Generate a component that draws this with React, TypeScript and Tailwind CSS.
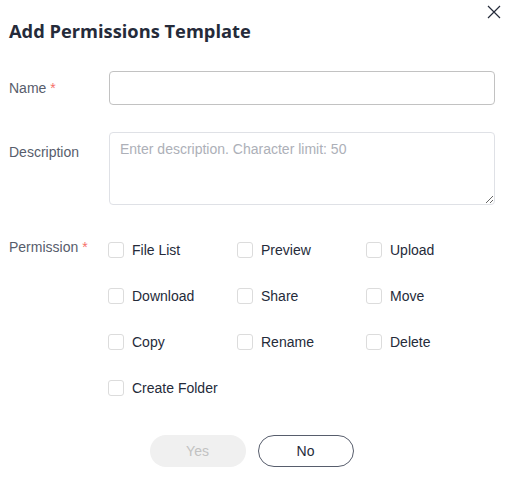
import React from "react";

const perms = [
  ["File List", "Preview", "Upload"],
  ["Download", "Share", "Move"],
  ["Copy", "Rename", "Delete"],
  ["Create Folder"],
];

function Box({ label }: { label: string }) {
  return (
    <label className="flex items-center h-[16px] w-[129px]">
      <span className="w-[16px] h-[16px] rounded-[3px] border border-[#dcdcdc] bg-white shrink-0" />
      <span className="ml-[8px] text-[14px] text-[#252b3a] whitespace-nowrap">{label}</span>
    </label>
  );
}

export default function App() {
  return (
    <div
      className="relative w-[507px] h-[485px] bg-white overflow-hidden"
      style={{ fontFamily: '"Liberation Sans", Arial, sans-serif' }}
    >
      <button className="absolute right-[6px] top-[5px] w-[14px] h-[14px]">
        <svg width="14" height="14" viewBox="0 0 14 14">
          <path d="M1 1 L13 13 M13 1 L1 13" stroke="#252b3a" strokeWidth="1.2" />
        </svg>
      </button>
      <div className="pl-[9px] pr-[12px] pt-[19px]">
        <h1
          className="text-[18.3px] leading-[24px] font-bold text-[#252b3a]"
          style={{ fontFamily: '"Open Sans", "Noto Sans", sans-serif' }}
        >
          Add Permissions Template
        </h1>
        <div className="mt-[28px] flex items-center">
          <div className="w-[100px] text-[14px] text-[#575d6c]">
            Name <span className="text-[#f66f6a]">*</span>
          </div>
          <input className="w-[386px] h-[34px] rounded-[4px] border border-[#c2c2c2] outline-none px-[10px] text-[14px]" />
        </div>
        <div className="mt-[27px] flex items-start">
          <div className="w-[100px] text-[14px] text-[#575d6c] pt-[10px]">Description</div>
          <textarea
            className="w-[386px] h-[73px] rounded-[4px] border border-[#dfe1e6] outline-none px-[10px] pt-[6px] text-[14px] placeholder:text-[#adb0b8] resize-y block"
            placeholder="Enter description. Character limit: 50"
          />
        </div>
        <div className="mt-[37px] flex items-start">
          <div className="w-[101px] text-[14px] text-[#575d6c] leading-[16px] mt-[-3px]">
            Permission <span className="text-[#f66f6a]">*</span>
          </div>
          <div className="flex flex-col gap-[30px]">
            {perms.map((row, i) => (
              <div key={i} className="flex">
                {row.map((p) => (
                  <Box key={p} label={p} />
                ))}
              </div>
            ))}
          </div>
        </div>
        <div className="mt-[39px] flex justify-center gap-[12px] pr-[1px]">
          <button className="w-[96px] h-[32px] rounded-full bg-[#f0f0f0] text-[#c2c2c2] text-[14px]">Yes</button>
          <button className="w-[96px] h-[32px] rounded-full border border-[#575d6c] text-[#252b3a] text-[14px] bg-white">No</button>
        </div>
      </div>
    </div>
  );
}
